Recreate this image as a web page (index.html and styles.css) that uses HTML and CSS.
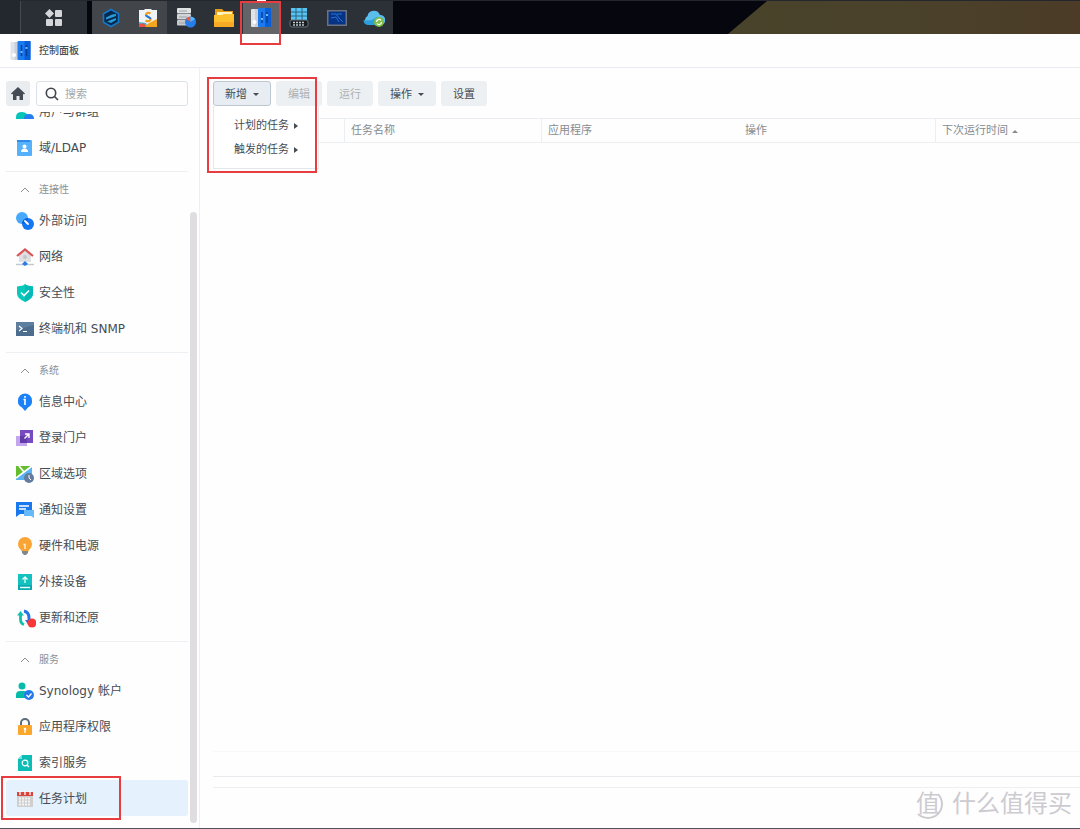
FILE: index.html
```html
<!DOCTYPE html>
<html lang="zh-CN">
  <head>
    <meta charset="UTF-8" />
    <meta name="viewport" content="width=device-width, initial-scale=1" />
    <title>控制面板</title>
    <link rel="stylesheet" href="styles.css">
  </head>
  <body>
    <header class="taskbar">
      <button class="main-menu" type="button" aria-label="主菜单">
        <svg width="18" height="18" viewBox="0 0 18 18" fill="#d5d6da"><path d="M4.500 0l4.500 4.500-4.500 4.500L0 4.500z"/><rect x="10" y="1" width="7" height="7" rx="1"/><rect x="1" y="10" width="7" height="7" rx="1"/><rect x="10" y="10" width="7" height="7" rx="1"/></svg>
      </button>
      <div class="apps">
        <button class="app open" type="button" aria-label="Active Backup">
          <svg width="20" height="20" viewBox="0 0 20 20"><path d="M10 1.500l7.500 4.200v8.600L10 18.500l-7.500-4.200V5.700z" fill="#06284d" stroke="#1478c8" stroke-width="1.600"/><path d="M5 9.500l6-3 4-.5v2l-4 1.500-6 2zM6 13.500l5-2 4-1.500v2L10 15z" fill="#2a9bd8"/></svg>
        </button>
        <button class="app open" type="button" aria-label="套件中心">
          <svg width="20" height="20" viewBox="0 0 20 20"><path d="M1 2h5l1-1h6l1 1h5v17H1z" fill="#eef4f5"/><path d="M1 14l7 1 2 4H1z" fill="#35b9ec"/><path d="M6 19l5-4 8-4v8z" fill="#f5a51d"/><path d="M1 16l5-1 2 4H1z" fill="#e95242"/><path d="M12.500 5.500C10 4 8 5 8 7s4.500 2 4.500 4-2.500 3-5 1.500" fill="none" stroke="#f39a14" stroke-width="2.200"/><path d="M8 7c0 2 4.500 2 4.500 4" fill="none" stroke="#2179e0" stroke-width="2.200"/></svg>
        </button>
        <button class="app" type="button" aria-label="存储空间管理员">
          <svg width="20" height="20" viewBox="0 0 20 20"><rect x="1" y="0" width="14" height="5.600" rx="1" fill="#e0e2e3"/><rect x="1" y="6" width="14" height="5.600" rx="1" fill="#d3d6d8"/><rect x="1" y="12" width="14" height="5.600" rx="1" fill="#c7cacc"/><path d="M3 3h8M3 9h8M3 15h6" stroke="#a0a4a7"/><circle cx="14.500" cy="14" r="5.500" fill="#277de9"/><path d="M14.500 14l-4.500-3a5.500 5.500 0 0 1 4.500-2.500z" fill="#ef5b3d"/><path d="M14.500 14V8.500a5.500 5.500 0 0 1 4.500 2.500z" fill="#56b7fa"/></svg>
        </button>
        <button class="app" type="button" aria-label="File Station">
          <svg width="20" height="20" viewBox="0 0 20 20"><path d="M1 1h7l2 2h9v8H1z" fill="#e29b17"/><path d="M3 4h15v5H3z" fill="#fff3bd"/><path d="M0 7h8l2-1h10v12q0 1-1 1H1q-1 0-1-1z" fill="#fdc130"/><path d="M0 14h20v4q0 1-1 1H1q-1 0-1-1z" fill="#f8aa24"/></svg>
        </button>
        <button class="app active" type="button" aria-label="控制面板">
          <svg width="20" height="20" viewBox="0 0 20 20"><use href="#panel"/></svg>
        </button>
        <button class="app" type="button" aria-label="资源监控">
          <svg width="20" height="20" viewBox="0 0 20 20"><path d="M2 0h16v12H2z" fill="#58c4f3"/><path d="M7 0v12M13 0v12M2 4h16M2 8h16" stroke="#2b6580"/><rect x="1" y="12" width="18" height="7" rx="2" fill="#171c20" stroke="#68727a"/><path d="M4 14.500h12M4 17h12" stroke="#c1c7ca" stroke-width="1.500" stroke-dasharray="2 1"/></svg>
        </button>
        <button class="app" type="button" aria-label="Virtual Machine Manager">
          <svg width="20" height="20" viewBox="0 0 20 20"><rect x="0" y="2" width="20" height="16" fill="#6b7380"/><rect x="1.500" y="3.500" width="17" height="13" fill="#073385"/><path d="M4 6h5l3 4 4 4M4 10l5-1 3 5M10 6h5" fill="none" stroke="#2275d8"/></svg>
        </button>
        <button class="app" type="button" aria-label="Cloud Sync">
          <svg width="22" height="20" viewBox="0 0 22 20"><path d="M5 17a5 5 0 0 1-.5-9A6.500 6.500 0 0 1 17 7a5 5 0 0 1 .5 10z" fill="#5bbdee"/><path d="M5 17a5 5 0 0 1-4.500-5q7 2 13-3l6 1v7z" fill="#2a9fdc"/><circle cx="16" cy="14" r="5" fill="#7fbf45"/><path d="M13.500 14a2.500 2.500 0 0 1 4.500-1.500M18.500 14a2.500 2.500 0 0 1-4.500 1.500" fill="none" stroke="#fff" stroke-width="1.200"/></svg>
        </button>
      </div>
      <div class="wallpaper"></div>
    </header>

    <main class="window">
      <div class="titlebar">
        <svg width="21" height="20" viewBox="0 0 20 20">
          <g id="panel"><rect x="0" y="1" width="8" height="18" rx="1" fill="#dfe3ea"/><path d="M4 1h4v18H4z" fill="#c9d0d9"/><circle cx="3.500" cy="14" r="2" fill="#fff"/><rect x="7" y="0" width="13" height="19" rx="1" fill="#1a7bf0"/><path d="M14 0h6v19h-6z" fill="#0b5fd6"/><path d="M11 4v11M16 4v11" stroke="#083f9c" stroke-width="1.500"/><path d="M10 11h2M15 7h2" stroke="#6db8f5" stroke-width="2"/></g>
        </svg>
        <h1>控制面板</h1>
      </div>

      <div class="content">
        <aside class="sidebar">
          <div class="search-row">
            <button class="home" type="button" aria-label="首页">
              <svg width="14" height="13" viewBox="0 0 14 13"><path d="M7 0l7 6.500-1 1-1-.8V13H8.500V9h-3v4H2V6.700l-1 .8-1-1z" fill="#454c53"/></svg>
            </button>
            <label class="search">
              <svg width="14" height="14" viewBox="0 0 14 14" fill="none" stroke="#3e444a" stroke-width="1.600"><circle cx="6" cy="6" r="4.700"/><path d="M9.500 9.500l3.500 3.500"/></svg>
              <input type="search" placeholder="搜索" aria-label="搜索" />
            </label>
          </div>

          <div class="scroll-area">
            <nav class="list">
              <a class="item" href="#">
                <svg width="18" height="18" viewBox="0 0 18 18"><circle cx="6" cy="4" r="3.500" fill="#06c5b8"/><path d="M0 16v-2q0-5 6-5t7 7z" fill="#06c5b8"/><path d="M8 16q0-5 5-5t5 5z" fill="#257df1"/></svg>
                用户与群组</a>
              <a class="item" href="#">
                <svg width="18" height="18" viewBox="0 0 18 18"><rect x="1" y="1" width="15" height="16" rx="1" fill="#55b1fc"/><path d="M1 1h13v2H1z" fill="#2d8ce9"/><circle cx="8.500" cy="7.500" r="2" fill="#fff"/><path d="M5 13q0-3.500 3.500-3.500T12 13z" fill="#fff"/></svg>
                域/LDAP</a>

              <section class="group">
                <h2><svg class="chevron" width="10" height="6" viewBox="0 0 10 6"><path d="M1 5l4-4 4 4"/></svg>连接性</h2>
                <a class="item" href="#">
                  <svg width="18" height="18" viewBox="0 0 18 18"><circle cx="6" cy="6" r="6" fill="#48a9fb"/><circle cx="12" cy="12" r="6" fill="#1677f3"/><path d="M6 12a6 6 0 0 1 6-6 6 6 0 0 1-6 6z" fill="#0d5fdc"/><path d="M9 9l3 3" stroke="#fff" stroke-width="1.800" stroke-linecap="round"/></svg>
                  外部访问</a>
                <a class="item" href="#">
                  <svg width="18" height="18" viewBox="0 0 18 18"><path d="M3 7l6-5 6 5v7H3z" fill="#dfdfe1"/><path d="M1 8l8-6.500L17 8" fill="none" stroke="#d95357" stroke-width="2.200"/><circle cx="9" cy="9" r="2" fill="#c4c6ca"/><path d="M0 16.500h18" stroke="#c3c9d1" stroke-width="1.500"/><path d="M9 13l3 3-3 2-3-2z" fill="#277ce3"/></svg>
                  网络</a>
                <a class="item" href="#">
                  <svg width="18" height="18" viewBox="0 0 18 18"><path d="M9 0l2 1.500 6 1v7q0 5-8 8.500-8-3.500-8-8.500v-7l6-1z" fill="#08c8b9"/><path d="M9 0l2 1.500 6 1v7q0 5-8 8.500z" fill="#05b9b6"/><path d="M5 8.500l3 3 5-5" fill="none" stroke="#fff" stroke-width="1.600"/></svg>
                  安全性</a>
                <a class="item" href="#">
                  <svg width="18" height="18" viewBox="0 0 18 18"><path d="M0 2h18v14H0z" fill="#4c6d8e"/><path d="M0 2h18v3L0 10z" fill="#5d7e9f"/><path d="M3 6l3 2.500L3 11M7 11.500h4" fill="none" stroke="#fff" stroke-width="1.200"/></svg>
                  终端机和 SNMP</a>
              </section>

              <section class="group">
                <h2><svg class="chevron" width="10" height="6" viewBox="0 0 10 6"><path d="M1 5l4-4 4 4"/></svg>系统</h2>
                <a class="item" href="#">
                  <svg width="18" height="18" viewBox="0 0 18 18"><path d="M9 18l-3-3.500A7 7 0 0 1 2 7.500a7 7 0 0 1 14 0 7 7 0 0 1-4 7z" fill="#1c80f7"/><path d="M7.500 6.500H9V12M9 3v1.700" fill="none" stroke="#fff" stroke-width="1.600"/></svg>
                  信息中心</a>
                <a class="item" href="#">
                  <svg width="18" height="18" viewBox="0 0 18 18"><path d="M0 7h11v10H0z" fill="#c3a5ed"/><path d="M4 1h13v13H4z" fill="#774ac2"/><path d="M4 7h7v7H4z" fill="#633aaa"/><path d="M8.500 9.500l4-4M9 5h4v4" fill="none" stroke="#fff" stroke-width="1.400"/></svg>
                  登录门户</a>
                <a class="item" href="#">
                  <svg width="18" height="18" viewBox="0 0 18 18"><path d="M0 1h16v14H0z" fill="#58b3f6"/><path d="M0 1h16L0 14z" fill="#65bc2c"/><path d="M0 13L16 1M3 1l5 6" stroke="#fff" stroke-width="1.700"/><circle cx="13" cy="13" r="5" fill="#647c9d"/><path d="M13 10v3l2 2" fill="none" stroke="#fff"/></svg>
                  区域选项</a>
                <a class="item" href="#">
                  <svg width="18" height="18" viewBox="0 0 18 18"><path d="M0 1h16v12H4l-4 3z" fill="#1978ed"/><path d="M8 9h10v8l-3-2H8z" fill="#65b9fc"/><path d="M3 5h10M3 8h7" stroke="#fff" stroke-width="1.300"/></svg>
                  通知设置</a>
                <a class="item" href="#">
                  <svg width="18" height="18" viewBox="0 0 18 18"><circle cx="9" cy="7" r="7" fill="#f9a536"/><path d="M4 11h10l-2 4H6z" fill="#f9a536"/><path d="M6 14h6v2l-2 2H8l-2-2z" fill="#818890"/><path d="M7.500 7.500H9V12" fill="none" stroke="#fff3d9" stroke-width="1.300"/></svg>
                  硬件和电源</a>
                <a class="item" href="#">
                  <svg width="18" height="18" viewBox="0 0 18 18"><path d="M2 1h14v16H2z" fill="#13c2bf"/><path d="M2 12h14v5H2z" fill="#08aaaf"/><path d="M9 10V4M6.500 6.500L9 4l2.500 2.500M4 14.500h10" fill="none" stroke="#e8ffff" stroke-width="1.300"/></svg>
                  外接设备</a>
                <a class="item" href="#">
                  <svg class="wide" width="20" height="20" viewBox="0 0 20 20"><path d="M8 16.500q-3.500-1-3.500-5.500V6" fill="none" stroke="#11bfab" stroke-width="2.800"/><path d="M1 7.500L4.500 3 8 7.500z" fill="#11bfab"/><path d="M8 3q5 1 5 7v4" fill="none" stroke="#2574e8" stroke-width="3"/><path d="M9 12h7l-3.500 5z" fill="#2574e8"/><circle cx="16" cy="15" r="4.500" fill="#f63838"/></svg>
                  更新和还原</a>
              </section>

              <section class="group">
                <h2><svg class="chevron" width="10" height="6" viewBox="0 0 10 6"><path d="M1 5l4-4 4 4"/></svg>服务</h2>
                <a class="item" href="#">
                  <svg width="18" height="18" viewBox="0 0 18 18"><circle cx="6" cy="4" r="3.500" fill="#07bba9"/><path d="M0 16v-3q0-4 4-4h4q5 0 5 7z" fill="#07bba9"/><circle cx="13" cy="13" r="5" fill="#2879ed"/><path d="M10.500 13l2 2 3-3.500" fill="none" stroke="#fff" stroke-width="1.300"/></svg>
                  Synology 帐户</a>
                <a class="item" href="#">
                  <svg width="18" height="18" viewBox="0 0 18 18"><path d="M5 8V5a4 4 0 0 1 8 0v3" fill="none" stroke="#5d6c7a" stroke-width="2"/><rect x="2" y="7" width="14" height="10" rx="1" fill="#fba729"/><circle cx="9" cy="11" r="1.300" fill="#fff"/><path d="M9 12v3" stroke="#fff" stroke-width="1.400"/></svg>
                  应用程序权限</a>
                <a class="item" href="#">
                  <svg width="18" height="18" viewBox="0 0 18 18"><path d="M6 1h10v16H2V5z" fill="#0bbdb5"/><path d="M6 1v4H2z" fill="#7ae1dc"/><circle cx="9" cy="9" r="2.800" fill="none" stroke="#fff" stroke-width="1.200"/><path d="M11 11l2 2" stroke="#fff" stroke-width="1.300"/></svg>
                  索引服务</a>
                <a class="item selected" href="#">
                  <svg width="18" height="18" viewBox="0 0 18 18"><path d="M1 3h16v14H1z" fill="#d0cfcf"/><path d="M1 2h16v4H1z" fill="#d8443e"/><path d="M4 1v4M9 1v4M14 1v4" stroke="#fff" stroke-width="1.300"/><path d="M3 8.500h12M3 11.500h12M3 14.500h12" stroke="#f4f4f4" stroke-width="2" stroke-dasharray="2 1"/></svg>
                  任务计划</a>
              </section>
            </nav>
            <div class="scrollbar"></div>
          </div>
        </aside>

        <section class="tasks">
          <div class="toolbar">
            <div class="dropdown">
              <button class="btn pressed" type="button">新增<span class="caret"></span></button>
              <div class="menu">
                <button type="button">计划的任务<span class="arrow"></span></button>
                <button type="button">触发的任务<span class="arrow"></span></button>
              </div>
            </div>
            <button class="btn" type="button" disabled>编辑</button>
            <button class="btn" type="button" disabled>运行</button>
            <button class="btn" type="button">操作<span class="caret"></span></button>
            <button class="btn" type="button">设置</button>
          </div>
          <table class="grid">
            <thead>
              <tr>
                <th class="enabled"></th>
                <th class="name">任务名称</th>
                <th class="name">应用程序</th>
                <th class="name plain">操作</th>
                <th>下次运行时间<span class="caret up"></span></th>
              </tr>
            </thead>
          </table>
          <div class="grid-body"></div>
          <div class="paging"></div>
          <div class="status"></div>
        </section>
      </div>

      <div class="watermark"><span class="stamp">值</span>什么值得买</div>
    </main>

    <div class="mark mark-app"></div>
    <div class="mark mark-menu"></div>
    <div class="mark mark-item"></div>
  </body>
</html>
```
FILE: styles.css
```css
* {
  box-sizing: border-box;
}

body {
  margin: 0;
  height: 100vh;
  position: relative;
  display: flex;
  flex-direction: column;
  overflow: hidden;
  font-family: "DejaVu Sans", "Noto Sans CJK SC", sans-serif;
  font-size: 12px;
  line-height: 16px;
  color: #454c53;
  background-color: #fefefe;
}

button,
input {
  font: inherit;
  color: inherit;
  border: 0;
  padding: 0;
  margin: 0;
}

button {
  display: flex;
  align-items: center;
  justify-content: center;
  background: none;
}

svg {
  flex: none;
}

/* top bar */
.taskbar {
  display: flex;
  height: 34px;
  background-color: #06070e;
  border-top: 1px solid #24282e;
}

.main-menu {
  width: 87px;
  padding-left: 20px;
  background: linear-gradient(to right, #23282e 20px, #454a50 20px, #454a50 21px, #2a2f35 21px);
}

.apps {
  display: flex;
  width: 301px;
  margin-left: 5px;
  background-color: #2b3137;
}

.app {
  flex: 1;
}

.app.open {
  background-color: #42464b;
}

.app.active {
  background-color: #626468;
}

/* running indicator above the icon */
.app.active::before {
  content: "";
  position: absolute;
  top: 0;
  width: 9px;
  height: 2px;
  background-color: #ffffff;
}

.wallpaper {
  flex: 1;
  margin-left: 335px;
  background: linear-gradient(to right, #48432a, #4b412a 60%, #4b3b27);
  clip-path: polygon(39px 0, 100% 0, 100% 100%, 0 100%);
}

/* window */
.window {
  flex: 1;
  min-height: 0;
  display: flex;
  flex-direction: column;
  border-bottom: 1px solid #55535a;
}

.titlebar {
  display: flex;
  align-items: center;
  gap: 8px;
  height: 34px;
  padding-left: 10px;
  border-bottom: 1px solid #e9edf2;
}

.titlebar h1 {
  margin: 0;
  font-size: 10px;
  font-weight: 500;
}

.content {
  flex: 1;
  min-height: 0;
  display: flex;
}

/* left side */
.sidebar {
  width: 200px;
  display: flex;
  flex-direction: column;
  padding: 13px 2px 0 6px;
  border-right: 1px solid #eceff3;
}

.search-row {
  display: flex;
  gap: 6px;
  padding-right: 9px;
  margin-bottom: 6px;
}

.home {
  width: 24px;
  height: 25px;
  border-radius: 3px;
  background-color: #e9edf0;
}

.search {
  flex: 1;
  min-width: 0;
  display: flex;
  align-items: center;
  gap: 6px;
  height: 25px;
  padding: 0 8px;
  border: 1px solid #dde2ea;
  border-radius: 3px;
}

.search input {
  width: 100%;
  min-width: 0;
  padding-top: 2px;
  font-size: 11px;
  outline: none;
  background: none;
}

.search input::placeholder {
  color: #a4a8ad;
}

.scroll-area {
  flex: 1;
  min-height: 0;
  display: flex;
  gap: 2px;
  overflow: hidden;
}

/* list is scrolled to the end, first row is half hidden */
.list {
  flex: 1;
  margin-top: -19px;
}

.scrollbar {
  width: 7px;
  margin: 100px 0 5px;
  border-radius: 4px;
  background-color: #dfdde1;
}

.item {
  display: flex;
  align-items: center;
  gap: 5px;
  height: 36px;
  padding: 2px 0 0 10px;
  border-radius: 3px;
  color: #454c53;
  text-decoration: none;
}

.item .wide {
  margin-right: -2px;
}

.item.selected {
  background-color: #e5f1fc;
}

.group {
  margin-top: 6px;
  border-top: 1px solid #edf0f3;
}

.group h2 {
  display: flex;
  align-items: center;
  gap: 9px;
  height: 30px;
  margin: 0;
  padding: 6px 0 0 14px;
  font-size: 10px;
  font-weight: normal;
  color: #8b9096;
}

.chevron {
  fill: none;
  stroke: #8b9096;
}

/* right side */
.tasks {
  flex: 1;
  min-width: 0;
  display: flex;
  flex-direction: column;
  padding: 13px 0 0 13px;
}

.toolbar {
  display: flex;
  gap: 5px;
  margin-bottom: 12px;
}

.btn {
  height: 25px;
  padding: 2px 12px 0;
  font-size: 11px;
  border-radius: 3px;
  background-color: #edf0f3;
}

.btn.pressed {
  padding: 2px 11px 0;
  border: 1px solid #bdc7d1;
  background-color: #e7edf2;
}

.btn:disabled {
  color: #acb1b6;
}

.caret {
  margin-left: 6px;
  border: 3px solid transparent;
  border-top-color: currentColor;
  border-bottom: 0;
}

.caret.up {
  display: inline-block;
  margin-left: 4px;
  vertical-align: middle;
  border-top: 0;
  border-bottom: 3px solid currentColor;
}

.dropdown {
  position: relative;
}

.menu {
  position: absolute;
  top: 25px;
  left: 0;
  width: 106px;
  padding: 8px 0 6px;
  background-color: #ffffff;
  border: 1px solid #e3e8ed;
  border-top: 0;
}

.menu button {
  width: 100%;
  height: 24px;
  padding-left: 20px;
  justify-content: flex-start;
  font-size: 11px;
}

.arrow {
  margin-left: 5px;
  border: 3px solid transparent;
  border-left: 4px solid #454c53;
  border-right: 0;
}

.grid {
  width: 100%;
  table-layout: fixed;
  border-collapse: separate;
  border-spacing: 0;
  border-top: 1px solid #e9edf1;
  border-bottom: 1px solid #eceff2;
}

.grid th {
  height: 23px;
  padding: 1px 0 0 6px;
  border-left: 1px solid #eceff2;
  font-size: 11px;
  font-weight: normal;
  text-align: left;
  color: #868b90;
}

.grid .enabled {
  width: 131px;
  border-left: 0;
}

.grid .name {
  width: 197px;
}

.grid .plain {
  border-left-color: transparent;
}

.grid-body {
  flex: 1;
}

.paging {
  height: 26px;
  border-top: 1px solid #f7f8f9;
  border-bottom: 1px solid #e9eaee;
}

.status {
  height: 51px;
  padding-top: 10px;
}

.status::before {
  content: "";
  display: block;
  border-top: 1px solid #eeeff2;
}

.watermark {
  position: absolute;
  right: 8px;
  bottom: 9px;
  display: flex;
  align-items: center;
  gap: 9px;
  font-size: 24px;
  line-height: 32px;
  color: #cdcbd0;
}

.stamp {
  width: 30px;
  height: 30px;
  line-height: 26px;
  text-align: center;
  border: 2px solid transparent;
  border-right-color: #cdcbd0;
  border-bottom-color: #cdcbd0;
  border-radius: 50%;
}

/* red frames over the steps */
.mark {
  position: absolute;
  border: 2px solid #e73c40;
  pointer-events: none;
}

.mark-app {
  left: 240px;
  top: 1px;
  width: 41px;
  height: 44px;
}

.mark-menu {
  left: 207px;
  top: 77px;
  width: 110px;
  height: 96px;
}

.mark-item {
  left: 1px;
  top: 776px;
  width: 120px;
  height: 44px;
}
```
